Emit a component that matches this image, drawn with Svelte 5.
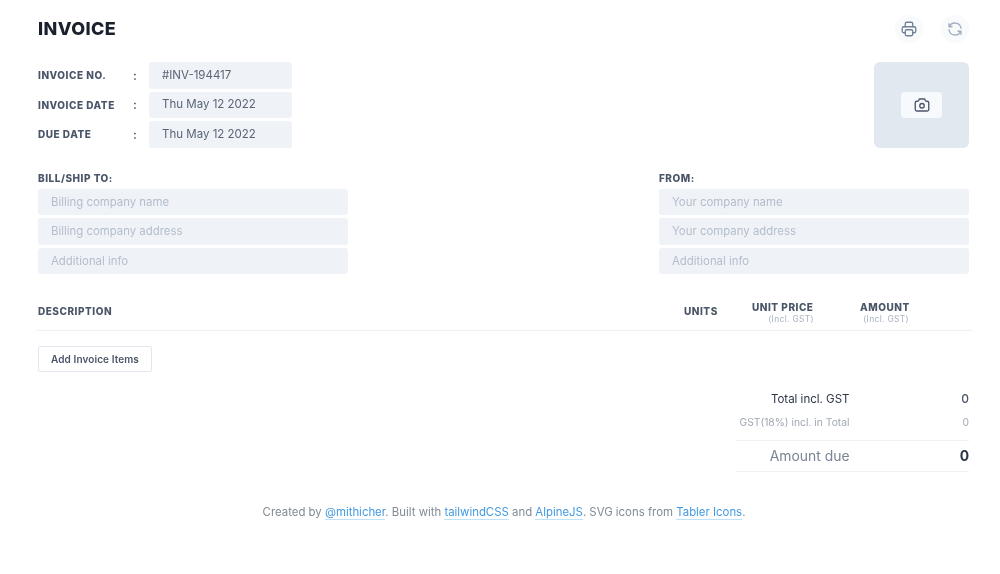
<script>
    const meta = [
        { label: "Invoice No.", value: "#INV-194417" },
        { label: "Invoice Date", value: "Thu May 12 2022" },
        { label: "Due Date", value: "Thu May 12 2022" }
    ];
    const billing = ["Billing company name", "Billing company address", "Additional info"];
    const from = ["Your company name", "Your company address", "Additional info"];
</script>

<div class="page">
    <header class="top">
        <h1>Invoice</h1>
        <div class="actions">
            <button class="round" aria-label="Print">
                <svg viewBox="0 0 24 24" width="18" height="18">
                    <path d="M17 17h2a2 2 0 0 0 2 -2v-4a2 2 0 0 0 -2 -2h-14a2 2 0 0 0 -2 2v4a2 2 0 0 0 2 2h2" />
                    <path d="M17 9v-4a2 2 0 0 0 -2 -2h-6a2 2 0 0 0 -2 2v4" />
                    <rect x="7" y="13" width="10" height="8" rx="2" />
                </svg>
            </button>
            <button class="round light" aria-label="Reset">
                <svg viewBox="0 0 24 24" width="18" height="18">
                    <path d="M20 11a8.1 8.1 0 0 0 -15.5 -2m-.5 -4v4h4" />
                    <path d="M4 13a8.1 8.1 0 0 0 15.5 2m.5 4v-4h-4" />
                </svg>
            </button>
        </div>
    </header>

    <section class="meta">
        <div class="rows">
            {#each meta as row}
                <div class="row">
                    <span class="label">{row.label}</span>
                    <span class="colon">:</span>
                    <div class="field value short">{row.value}</div>
                </div>
            {/each}
        </div>
        <div class="logo">
            <button class="camera" aria-label="Upload logo">
                <svg viewBox="0 0 24 24" width="18" height="18">
                    <path d="M5 7h1a2 2 0 0 0 2 -2a1 1 0 0 1 1 -1h6a1 1 0 0 1 1 1a2 2 0 0 0 2 2h1a2 2 0 0 1 2 2v9a2 2 0 0 1 -2 2h-14a2 2 0 0 1 -2 -2v-9a2 2 0 0 1 2 -2" />
                    <circle cx="12" cy="13" r="3" />
                </svg>
            </button>
        </div>
    </section>

    <section class="parties">
        <div class="party">
            <div class="label heading">Bill/Ship To:</div>
            {#each billing as text}
                <div class="field">{text}</div>
            {/each}
        </div>
        <div class="party">
            <div class="label heading">From:</div>
            {#each from as text}
                <div class="field">{text}</div>
            {/each}
        </div>
    </section>

    <div class="table-head">
        <div class="label col-desc">Description</div>
        <div class="label col-units">Units</div>
        <div class="label col-price">Unit Price<small>(Incl. GST)</small></div>
        <div class="label col-amount">Amount<small>(Incl. GST)</small></div>
    </div>

    <button class="add">Add Invoice Items</button>

    <section class="totals">
        <div class="total main"><span>Total incl. GST</span><span class="num">0</span></div>
        <div class="total tax"><span>GST(18%) incl. in Total</span><span class="num">0</span></div>
        <div class="total due"><span>Amount due</span><span class="num">0</span></div>
    </section>

    <footer>
        Created by <a href="#top">@mithicher</a>. Built with <a href="#top">tailwindCSS</a> and <a href="#top">AlpineJS</a>. SVG icons from <a href="#top">Tabler Icons</a>.
    </footer>
</div>

<style>
    :global(body) {
        background: #fff;
    }
    .page {
        width: 1000px;
        height: 574px;
        box-sizing: border-box;
        padding: 14px 31px 0 38px;
        font-family: Inter, "Liberation Sans", sans-serif;
        color: #4a5568;
        overflow: hidden;
        filter: blur(0.4px);
    }
    .top {
        display: flex;
        justify-content: space-between;
        align-items: center;
        height: 30px;
    }
    h1 {
        margin: 0;
        font-size: 18px;
        line-height: 28px;
        font-weight: 800;
        letter-spacing: 0.38px;
        text-transform: uppercase;
        color: #1a202c;
    }
    .actions {
        display: flex;
        gap: 18px;
    }
    .round {
        width: 28px;
        height: 28px;
        padding: 0;
        border: 0;
        border-radius: 50%;
        background: #f9fafb;
        display: flex;
        align-items: center;
        justify-content: center;
        color: #718096;
    }
    .round.light {
        color: #a0aec0;
    }
    svg {
        fill: none;
        stroke: currentColor;
        stroke-width: 1.75;
        stroke-linecap: round;
        stroke-linejoin: round;
    }
    .meta {
        display: flex;
        justify-content: space-between;
        margin-top: 18px;
    }
    .rows {
        display: flex;
        flex-direction: column;
        gap: 3px;
    }
    .row {
        display: flex;
        align-items: center;
    }
    .label {
        font-size: 10px;
        line-height: 14px;
        font-weight: 800;
        letter-spacing: 0.52px;
        text-transform: uppercase;
        color: #4a5568;
    }
    .row .label {
        width: 95px;
    }
    .colon {
        width: 16px;
        font-size: 12px;
        font-weight: 600;
    }
    .field {
        height: 26.5px;
        box-sizing: border-box;
        padding: 0 13px;
        display: flex;
        align-items: center;
        margin-bottom: 3px;
        background: #eff3f8;
        border-radius: 3px;
        font-size: 11.4px;
        color: #b4bdca;
    }
    .field:last-child {
        margin-bottom: 0;
    }
    .field.value {
        padding-bottom: 1px;
        color: #5a6475;
        margin-bottom: 0;
        font-size: 11.5px;
    }
    .short {
        width: 143px;
    }
    .logo {
        width: 95px;
        height: 85.5px;
        background: #e2e8f0;
        border-radius: 6px;
        display: flex;
        align-items: center;
        justify-content: center;
    }
    .camera {
        width: 41px;
        height: 26px;
        padding: 0;
        border: 0;
        border-radius: 4px;
        background: #f7fafc;
        color: #4a5568;
        display: flex;
        align-items: center;
        justify-content: center;
    }
    .parties {
        display: flex;
        justify-content: space-between;
        margin-top: 23px;
    }
    .party {
        width: 310px;
    }
    .heading {
        margin-bottom: 4px;
    }
    .table-head {
        display: flex;
        align-items: center;
        box-sizing: border-box;
        height: 42px;
        margin: 14.5px -4px 0 -2px;
        padding: 4px 0 0 2px;
        border-bottom: 1px solid #edf2f7;
    }
    .table-head .label {
        line-height: 12px;
    }
    .col-desc {
        flex: 1;
    }
    .col-units {
        width: 68px;
    }
    .col-price {
        width: 62px;
        margin-right: 46px;
        padding-top: 3px;
    }
    .col-amount {
        width: 49px;
        margin-right: 64px;
        padding-top: 3px;
    }
    .table-head small {
        display: block;
        margin-top: 2px;
        text-align: right;
        font-size: 8.4px;
        line-height: 9px;
        font-weight: 400;
        text-transform: none;
        letter-spacing: 0.35px;
        color: #a8b2c0;
    }
    .add {
        display: block;
        margin-top: 15px;
        width: 114px;
        height: 26px;
        padding: 0;
        background: #fff;
        border: 1px solid #e2e8f0;
        border-radius: 2px;
        font: 600 10px Inter, "Liberation Sans", sans-serif;
        letter-spacing: 0.1px;
        color: #4a5568;
    }
    .totals {
        margin: 15px 0 0 auto;
        width: 233px;
    }
    .total {
        display: flex;
        justify-content: space-between;
    }
    .total span:first-child {
        width: 113.5px;
        white-space: nowrap;
        display: flex;
        justify-content: flex-end;
    }
    .main {
        height: 24px;
        align-items: center;
        font-size: 11.5px;
        color: #2d3748;
    }
    .main .num {
        font-size: 12px;
        font-weight: 500;
        color: #4a5568;
    }
    .tax {
        height: 23px;
        align-items: center;
        font-size: 10.3px;
        color: #a0a8b4;
    }
    .due {
        height: 30px;
        margin-top: 6px;
        align-items: center;
        border-top: 1px solid #edf2f7;
        border-bottom: 1px solid #edf2f7;
        font-size: 13.9px;
        color: #7b8494;
    }
    .due .num {
        font-weight: 700;
        color: #2d3748;
    }
    footer {
        margin-top: 32px;
        margin-right: -31px;
        margin-left: -30px;
        text-align: center;
        font-size: 11.4px;
        line-height: 16px;
        color: #838a94;
    }
    footer a {
        color: #4299e1;
        text-decoration: none;
        border-bottom: 1px solid #bee3f8;
    }
</style>
